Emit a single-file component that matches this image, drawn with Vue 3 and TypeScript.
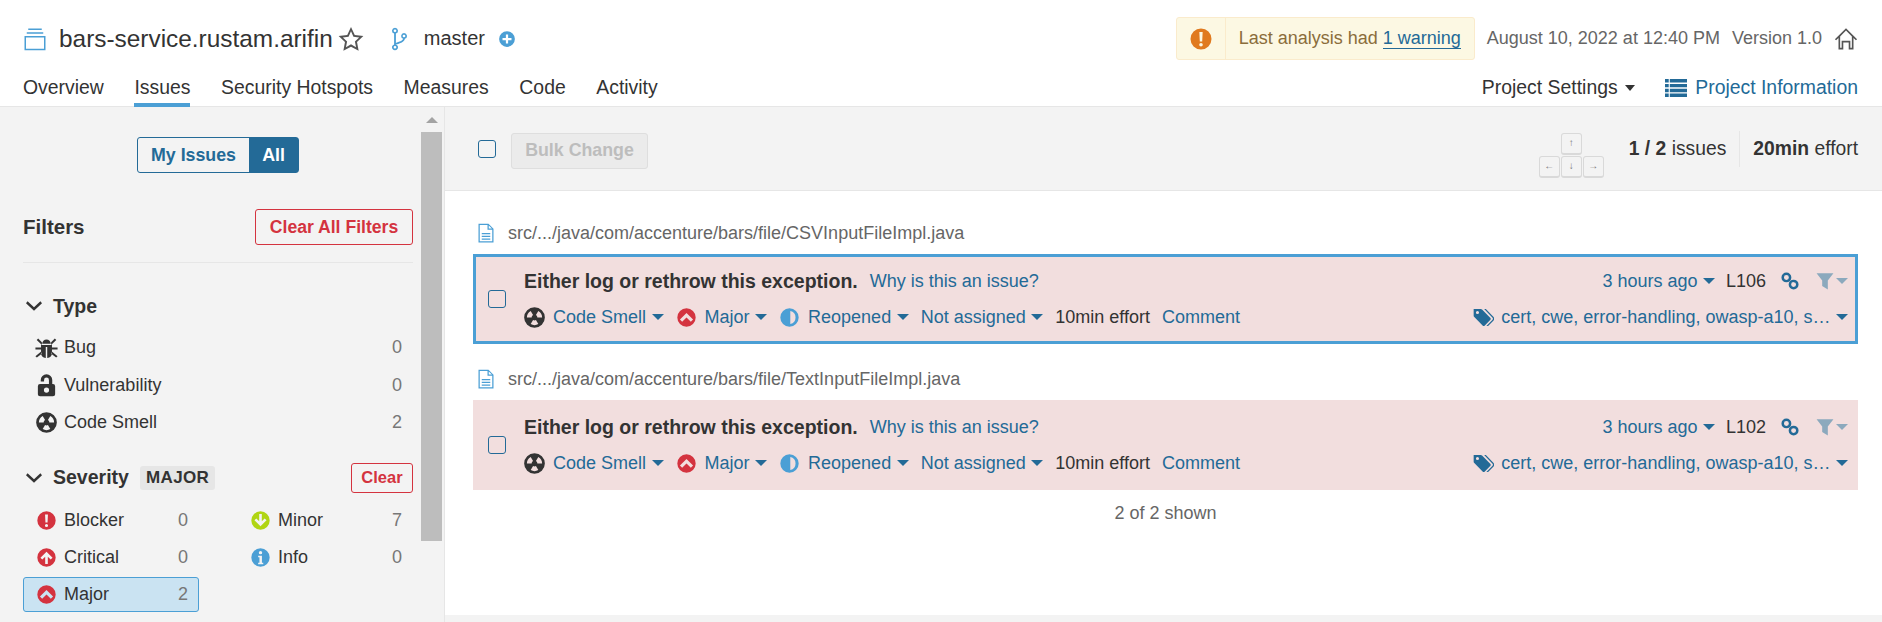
<template>
  <div class="page">
    <header class="header">
      <div class="top-row">
        <Icon name="project" class="project-icon" />
        <h1 class="project-name">bars-service.rustam.arifin</h1>
        <Icon name="star" class="star-icon" />
        <Icon name="branch" class="branch-icon" />
        <span class="branch-name">master</span>
        <Icon name="plus" class="plus-icon" />
        <div class="warning-box">
          <span class="warning-left"><Icon name="blocker" class="warning-icon" /></span>
          <span class="warning-text">Last analysis had <a class="warning-link">1 warning</a></span>
        </div>
        <span class="meta date">August 10, 2022 at 12:40 PM</span>
        <span class="meta version">Version 1.0</span>
        <Icon name="home" class="home-icon" />
      </div>
      <nav class="nav-row">
        <a
          v-for="item in navItems"
          :key="item"
          class="nav-item"
          :class="{ active: item === 'Issues' }"
        >{{ item }}</a>
        <a class="nav-settings">Project Settings<span class="caret dark" /></a>
        <a class="nav-info"><Icon name="list" class="list-icon" />Project Information</a>
      </nav>
    </header>

    <div class="body">
      <aside class="sidebar">
        <div class="sidebar-scroll">
          <div class="toggle">
            <span class="toggle-off">My Issues</span>
            <span class="toggle-on">All</span>
          </div>

          <div class="filters-head">
            <h2>Filters</h2>
            <button class="red-button large">Clear All Filters</button>
          </div>

          <div class="facet-head type-head">
            <Icon name="chevron" class="chevron" />
            <h3>Type</h3>
          </div>
          <div
            v-for="row in typeFacets"
            :key="row.label"
            class="facet-row"
          >
            <Icon :name="row.icon" class="type-icon" />
            <span class="facet-label">{{ row.label }}</span>
            <span class="facet-count">{{ row.count }}</span>
          </div>

          <div class="facet-head severity-head">
            <Icon name="chevron" class="chevron" />
            <h3>Severity</h3>
            <span class="badge">MAJOR</span>
            <button class="red-button small">Clear</button>
          </div>
          <div class="severity-grid">
            <div
              v-for="row in severityFacets"
              :key="row.label"
              class="facet-row"
              :class="{ selected: row.selected }"
            >
              <Icon :name="row.icon" class="facet-icon" :style="{ color: row.color }" />
              <span class="facet-label">{{ row.label }}</span>
              <span class="facet-count">{{ row.count }}</span>
            </div>
          </div>
        </div>
        <div class="scrollbar">
          <span class="scroll-arrow" />
          <span class="scroll-thumb" />
        </div>
      </aside>

      <main class="main">
        <div class="toolbar">
          <span class="checkbox" />
          <button class="bulk-button">Bulk Change</button>
          <div class="keys">
            <span class="key up">↑</span>
            <span class="key left">←</span>
            <span class="key">↓</span>
            <span class="key">→</span>
          </div>
          <span class="paging"><b>1 / 2</b> issues</span>
          <span class="effort"><b>20min</b> effort</span>
        </div>

        <div class="issues">
          <template
            v-for="(issue, index) in issues"
            :key="issue.file"
          >
            <div class="file-path">
              <Icon name="file" class="file-icon" />
              <span>{{ issue.file }}</span>
            </div>
            <div
              class="issue"
              :class="{ current: index === 0 }"
            >
              <span class="checkbox issue-check" />
              <div class="issue-body">
                <div class="issue-line">
                  <strong class="issue-title">Either log or rethrow this exception.</strong>
                  <a class="link why">Why is this an issue?</a>
                  <a class="link age">3 hours ago<span class="caret" /></a>
                  <span class="line-no">{{ issue.line }}</span>
                  <Icon name="chain" class="chain-icon" />
                  <Icon name="funnel" class="funnel-icon" />
                  <span class="caret muted" />
                </div>
                <div class="issue-line second">
                  <Icon name="smell" class="issue-icon smell-icon" />
                  <a class="link">Code Smell<span class="caret" /></a>
                  <Icon name="major" class="issue-icon red" />
                  <a class="link">Major<span class="caret" /></a>
                  <Icon name="reopened" class="issue-icon light-blue" />
                  <a class="link">Reopened<span class="caret" /></a>
                  <a class="link">Not assigned<span class="caret" /></a>
                  <span class="issue-effort">10min effort</span>
                  <a class="link comment">Comment</a>
                  <Icon name="tags" class="tags-icon" />
                  <a class="link tag-list">cert, cwe, error-handling, owasp-a10, s…<span class="caret" /></a>
                </div>
              </div>
            </div>
          </template>
          <div class="shown">2 of 2 shown</div>
        </div>
      </main>
    </div>
  </div>
</template>

<script setup lang="ts">
import { h } from 'vue'

// every icon is drawn on a 16 x 16 grid
const paths: Record<string, string> = {
  blocker: 'M8 1a7 7 0 100 14A7 7 0 008 1zM6.900 3.400h2.200l-.3 6.200H7.200zM8 10.600a1.200 1.200 0 110 2.400 1.200 1.200 0 010-2.400z',
  critical: 'M8 1a7 7 0 100 14A7 7 0 008 1zM8 3.600l4.600 4.600-1.400 1.400-2.200-2.200V13H7V7.400L4.800 9.600 3.400 8.200z',
  major: 'M8 1a7 7 0 100 14A7 7 0 008 1zM8 4.600l5 5-1.700 1.700L8 8l-3.300 3.300L3 9.600z',
  minor: 'M8 1a7 7 0 100 14A7 7 0 008 1zM7 3h2v5.600l2.200-2.200 1.400 1.400L8 12.400 3.400 7.800l1.400-1.400L7 8.600z',
  info: 'M8 1a7 7 0 100 14A7 7 0 008 1zM8 3a1.300 1.300 0 110 2.600A1.300 1.300 0 018 3zM6.200 6.600h2.900V12h1v1.200H6.200V12h1V7.800h-1z',
  bug: 'M5 5.400a3 3 0 016 0zM4.200 6.200h7.600v5.400a3.800 3.800 0 01-3.300 3.700V7.600h-1v7.700a3.800 3.800 0 01-3.300-3.700zM1.200 2.800l1-1 2.600 2.600v1.800zM14.800 2.800l-1-1-2.600 2.600v1.800zM.3 8h3.900v1.400H.3zM11.800 8h3.900v1.400h-3.900zM1.300 15l-1-1 3.800-3 .6 1.300zM14.700 15l1-1-3.800-3-.6 1.300z',
  lock: 'M12 7V4.200a4 4 0 00-8 0V5.200h2.300v-1a1.700 1.700 0 013.400 0V7zM3.500 7h9A1.500 1.500 0 0114 8.500v5.500a1.500 1.500 0 01-1.500 1.500h-9A1.500 1.500 0 012 14V8.500A1.500 1.500 0 013.500 7zM8 9.400a1.800 1.800 0 100 3.600 1.800 1.800 0 000-3.600z',
  smell: 'M8 .8a7.200 7.200 0 100 14.400A7.200 7.200 0 008 .8zM10 8h3.300a5.300 5.300 0 00-2.650-4.590L9 6.270A2 2 0 0110 8zM6 8H2.700a5.300 5.300 0 012.650-4.590L7 6.270A2 2 0 006 8zM7 9.730l-1.650 2.860a5.300 5.300 0 005.300 0L9 9.730a2 2 0 01-2 0z',
  reopened: 'M8 1a7 7 0 100 14A7 7 0 008 1zM8.600 3.100a5 5 0 010 9.800z',
  chevron: 'M1.600 3.200L8 9.200l6.400-6L16 5.200 8 12.800 0 5.200z',
  file: 'M2 .5h8l4 4v11H2zM3 1.500v13h10V5.400H9.200V1.500zM10.200 2v2.400h2.500zM4.600 8h6.800v1H4.600zM4.600 10.200h6.800v1H4.600zM4.600 12.400h6.800v1H4.600z',
  project: 'M1 6h14v9.500H1zM2 7v7.500h12V7zM2.500 3.500h11v1h-11zM3.500 1h9v1h-9z',
  star: 'M8 .6l2.300 4.900 5.300.7-3.900 3.700 1 5.300L8 12.700l-4.700 2.500 1-5.300L.4 6.200l5.300-.7zM8 3.300L6.500 6.600l-3.500.5 2.600 2.400-.7 3.500L8 11.300l3.100 1.700-.7-3.500L13 7.100l-3.500-.5z',
  branch: 'M6 .5a2 2 0 01.6 3.900V11.600a2 2 0 11-1.200 0V4.400A2 2 0 016 .5zM6 1.600a.9.9 0 100 1.800.9.9 0 000-1.800zM6 12.600a.9.9 0 100 1.800.9.9 0 000-1.800zM12 4a2 2 0 01.6 3.900c-.3 1.700-2 2.900-5.800 3.800l-.3-1.100c3.200-.8 4.700-1.700 5-2.700A2 2 0 0112 4zM12 5.100a.9.9 0 100 1.800.9.9 0 000-1.800z',
  plus: 'M8 1a7 7 0 100 14A7 7 0 008 1zM7 4h2v3h3v2H9v3H7V9H4V7h3z',
  home: 'M8 .8l7.400 7.300-.8.800-1.600-1.500V15H9.800v-4.700H6.200V15H3V7.400L1.400 8.900.6 8.100zM8 2.400L4.100 6.300V13.900h1v-4.700h5.800v4.700h1V6.300z',
  list: 'M0 1.500h2.700v2.500H0zM3.500 1.500H16v2.500H3.500zM0 5h2.700v2.500H0zM3.500 5H16v2.500H3.500zM0 8.500h2.700V11H0zM3.500 8.500H16V11H3.500zM0 12h2.700v2.500H0zM3.500 12H16v2.500H3.500z',
  chain: 'M4.800.4a4.400 4.400 0 110 8.800 4.400 4.400 0 010-8.800zM4.800 2.600a2.200 2.200 0 100 4.400 2.200 2.200 0 000-4.400zM11.200 6.800a4.400 4.400 0 110 8.800 4.400 4.400 0 010-8.800zM11.200 9a2.200 2.200 0 100 4.400 2.200 2.200 0 000-4.400z',
  funnel: 'M.5 1h15l-5 6.500V15.500L5.500 12.500V7.500z',
  tags: 'M.5 1.500h5.300a1.500 1.500 0 011.100.400l6.200 6.300a1.200 1.200 0 010 1.700l-4.100 4.100a1.200 1.200 0 01-1.700 0L1 7.700a1.500 1.500 0 01-.5-1.100zM3.400 3a1.200 1.200 0 100 2.400 1.200 1.200 0 000-2.400zM8.500 1.500h1.300l5.700 5.900a2.400 2.400 0 010 3.100l-4 4h-1.300l4.300-4.400a1.500 1.500 0 000-2.300z',
}

const Icon = (props: { name: string }) =>
  h('svg', { viewBox: '0 0 16 16', fill: 'currentColor', 'aria-hidden': 'true' }, [
    h('path', { d: paths[props.name], 'fill-rule': 'evenodd' }),
  ])
Icon.props = ['name']

const navItems = ['Overview', 'Issues', 'Security Hotspots', 'Measures', 'Code', 'Activity']

const typeFacets = [
  { icon: 'bug', label: 'Bug', count: 0 },
  { icon: 'lock', label: 'Vulnerability', count: 0 },
  { icon: 'smell', label: 'Code Smell', count: 2 },
]

const severityFacets = [
  { icon: 'blocker', label: 'Blocker', count: 0, color: '#d4333f' },
  { icon: 'minor', label: 'Minor', count: 7, color: '#b0d513' },
  { icon: 'critical', label: 'Critical', count: 0, color: '#d4333f' },
  { icon: 'info', label: 'Info', count: 0, color: '#4b9fd5' },
  { icon: 'major', label: 'Major', count: 2, color: '#d4333f', selected: true },
]

const issues = [
  { file: 'src/.../java/com/accenture/bars/file/CSVInputFileImpl.java', line: 'L106' },
  { file: 'src/.../java/com/accenture/bars/file/TextInputFileImpl.java', line: 'L102' },
]
</script>

<style>
html,
body {
  margin: 0;
  background: #fff;
}
</style>

<style scoped>
.page {
  display: flex;
  flex-direction: column;
  height: 622px;
  overflow: hidden;
  font-family: "Liberation Sans", Arial, sans-serif;
  font-size: 18px;
  color: #333;
}

svg {
  display: block;
  flex: none;
}

a {
  cursor: pointer;
}

.header {
  flex: none;
  height: 107px;
  box-sizing: border-box;
  padding: 17px 24px 0 23px;
  background: #fff;
  border-bottom: 1px solid #e6e6e6;
}

.top-row {
  display: flex;
  align-items: center;
  height: 43px;
}

.project-icon {
  width: 24px;
  height: 24px;
  color: #4b9fd5;
  margin-right: 12px;
}

.project-name {
  margin: 0;
  font-size: 24.4px;
  font-weight: 400;
}

.star-icon {
  width: 26px;
  height: 26px;
  margin-left: 5px;
  color: #555;
}

.branch-icon {
  width: 24px;
  height: 24px;
  margin-left: 22px;
  color: #4b9fd5;
}

.branch-name {
  margin-left: 14px;
  font-size: 20px;
}

.plus-icon {
  width: 18px;
  height: 18px;
  margin-left: 13px;
  color: #4b9fd5;
}

.warning-box {
  display: flex;
  align-items: center;
  height: 43px;
  box-sizing: border-box;
  margin-left: auto;
  background: #fcf8e3;
  border: 1px solid #faebcc;
  border-radius: 3px;
  color: #8a6d3b;
}

.warning-left {
  display: flex;
  align-items: center;
  height: 100%;
  padding: 0 12px;
  border-right: 1px solid #faebcc;
}

.warning-icon {
  width: 24px;
  height: 24px;
  color: #e07a1f;
}

.warning-text {
  padding: 0 13px;
}

.warning-link {
  color: #236a97;
  border-bottom: 1px solid #236a97;
}

.meta {
  color: #666;
}

.date {
  margin-left: 12px;
}

.version {
  margin-left: 12px;
}

.home-icon {
  width: 24px;
  height: 24px;
  margin-left: 12px;
  color: #555;
}

.nav-row {
  display: flex;
  align-items: flex-start;
  gap: 30.600px;
  margin-top: 14px;
  font-size: 19.400px;
}

.nav-item {
  height: 33px;
  box-sizing: border-box;
  padding-top: 2px;
  color: #333;
}

.nav-item.active {
  border-bottom: 4px solid #4b9fd5;
}

.nav-settings {
  display: flex;
  align-items: center;
  margin-left: auto;
  padding-top: 2px;
}

.nav-info {
  display: flex;
  align-items: center;
  gap: 8px;
  padding-top: 2px;
  color: #236a97;
}

.list-icon {
  width: 22px;
  height: 22px;
}

.caret {
  display: inline-block;
  width: 0;
  height: 0;
  margin-left: 5.500px;
  vertical-align: 3px;
  border-left: 6px solid transparent;
  border-right: 6px solid transparent;
  border-top: 6px solid #236a97;
}

.caret.dark {
  margin-left: 7px;
  border-top-color: #333;
  border-left-width: 5px;
  border-right-width: 5px;
}

.caret.muted {
  margin-left: 2px;
  border-top-color: #8ca9bd;
}

.body {
  flex: 1;
  display: flex;
  min-height: 0;
  background: #f3f3f3;
}

.sidebar {
  flex: none;
  display: flex;
  width: 445px;
  box-sizing: border-box;
  border-right: 1px solid #e6e6e6;
}

.sidebar-scroll {
  flex: 1;
  min-width: 0;
  box-sizing: border-box;
  padding: 30px 8px 0 23px;
}

.toggle {
  display: flex;
  width: 162px;
  height: 36px;
  box-sizing: border-box;
  margin: 0 auto 0 114px;
  border: 1px solid #236a97;
  border-radius: 3px;
  font-size: 17.800px;
  font-weight: 700;
  line-height: 34px;
}

.toggle-off {
  flex: 1;
  text-align: center;
  color: #236a97;
}

.toggle-on {
  width: 49px;
  text-align: center;
  background: #236a97;
  color: #fff;
}

.filters-head {
  display: flex;
  align-items: flex-start;
  justify-content: space-between;
  height: 53px;
  margin-top: 36px;
  border-bottom: 1px solid #e6e6e6;
}

.filters-head h2 {
  margin: 6px 0 0;
  font-size: 20.500px;
  font-weight: 700;
}

.red-button {
  box-sizing: border-box;
  padding: 0;
  background: transparent;
  border: 1px solid #d4333f;
  border-radius: 3px;
  color: #d4333f;
  font-family: inherit;
  font-weight: 700;
}

.red-button.large {
  width: 158px;
  height: 36px;
  font-size: 17.600px;
}

.red-button.small {
  width: 62px;
  height: 30px;
  margin-left: auto;
  font-size: 16.500px;
}

.facet-head {
  display: flex;
  align-items: center;
}

.type-head {
  height: 30px;
  margin-top: 28px;
}

.severity-head {
  height: 30px;
  margin-top: 22.500px;
}

.facet-head h3 {
  margin: 0;
  font-size: 19.500px;
  font-weight: 700;
}

.chevron {
  width: 16px;
  height: 16px;
  margin: 0 11px 0 3px;
}

.badge {
  margin-left: 11px;
  padding: 2px 6px;
  background: #e6e6e6;
  border-radius: 3px;
  font-size: 17px;
  font-weight: 700;
  letter-spacing: .4px;
}

.facet-row {
  display: flex;
  align-items: center;
  height: 35px;
  box-sizing: border-box;
  margin-top: 2.500px;
  padding: 0 10px 0 12px;
  border: 1px solid transparent;
  border-radius: 3px;
}

.type-head + .facet-row {
  margin-top: 9px;
}

.type-icon {
  width: 23px;
  height: 23px;
  margin: 0 6px 0 -1px;
  color: #333;
}

.facet-icon {
  width: 21px;
  height: 21px;
  margin-right: 7px;
}

.facet-count {
  margin-left: auto;
  color: #777;
}

.severity-grid {
  display: grid;
  grid-template-columns: 176px 176px;
  column-gap: 38px;
  margin-top: 10.400px;
}

.severity-grid .facet-row {
  margin-top: 0;
  margin-bottom: 2px;
}

.facet-row.selected {
  background: #cae3f2;
  border-color: #4b9fd5;
}

.scrollbar {
  flex: none;
  display: flex;
  flex-direction: column;
  align-items: center;
  width: 21px;
  margin-right: 2px;
}

.scroll-arrow {
  width: 0;
  height: 0;
  margin-top: 10px;
  border-left: 6px solid transparent;
  border-right: 6px solid transparent;
  border-bottom: 6px solid #a3a3a3;
}

.scroll-thumb {
  width: 100%;
  height: 409px;
  margin-top: 9px;
  background: #bdbdbd;
}

.main {
  flex: 1;
  min-width: 0;
  display: flex;
  flex-direction: column;
  margin-bottom: 7px;
  background: #fff;
}

.toolbar {
  flex: none;
  display: flex;
  align-items: center;
  height: 84px;
  box-sizing: border-box;
  padding: 0 24px 0 33px;
  background: #f3f3f3;
  border-bottom: 1px solid #e6e6e6;
  font-size: 19.300px;
}

.checkbox {
  display: block;
  flex: none;
  width: 18px;
  height: 18px;
  box-sizing: border-box;
  border: 1px solid #236a97;
  border-radius: 3px;
}

.bulk-button {
  width: 137px;
  height: 36px;
  margin: 4px 0 0 15px;
  padding: 0;
  background: #ebebeb;
  border: 1px solid #dedede;
  border-radius: 3px;
  color: #bdbdbd;
  font-family: inherit;
  font-size: 17.800px;
  font-weight: 700;
}

.keys {
  display: grid;
  grid-template-columns: repeat(3, 21px);
  gap: 1px;
  margin: 14px 0 0 auto;
}

.key {
  height: 22px;
  background: #f3f3f3;
  border: 1px solid #d9d9d9;
  border-bottom-width: 2px;
  border-radius: 3px;
  box-sizing: border-box;
  color: #777;
  font-size: 10px;
  line-height: 18px;
  text-align: center;
}

.key.up {
  grid-column: 2;
}

.key.left {
  grid-column: 1;
}

.paging {
  margin-left: 25px;
  padding-right: 13px;
  border-right: 1px solid #e6e6e6;
  line-height: 36px;
}

.effort {
  margin-left: 13px;
}

.issues {
  padding: 29px 24px 0 28px;
}

.file-path {
  display: flex;
  align-items: center;
  gap: 12px;
  height: 26px;
  padding-left: 3px;
  margin-bottom: 8px;
  color: #666;
}

.file-icon {
  width: 20px;
  height: 22px;
  color: #4b9fd5;
}

.issue {
  display: flex;
  align-items: center;
  height: 90px;
  box-sizing: border-box;
  margin-bottom: 22px;
  padding: 0 7px 0 12px;
  background: #f2dede;
  border: 3px solid #f2dede;
}

.issue.current {
  border-color: #4b9fd5;
}

.issue-check {
  margin-right: 18px;
}

.issue-body {
  flex: 1;
  min-width: 0;
}

.issue-line {
  display: flex;
  align-items: center;
  height: 26px;
}

.issue-line.second {
  margin-top: 10px;
}

.issue-title {
  font-size: 19.500px;
}

.link {
  color: #236a97;
  white-space: nowrap;
}

.second .link {
  margin-right: 12px;
}

.why {
  margin-left: 12px;
}

.age {
  margin-left: auto;
}

.line-no {
  margin-left: 11px;
}

.chain-icon {
  width: 18px;
  height: 18px;
  margin-left: 15px;
  color: #236a97;
}

.funnel-icon {
  width: 18px;
  height: 18px;
  margin-left: 17px;
  color: #8ca9bd;
}

.issue-icon {
  width: 21px;
  height: 21px;
  margin-right: 8px;
}

.smell-icon {
  width: 23px;
  height: 23px;
  margin-left: -1px;
  margin-right: 7px;
  color: #333;
}

.red {
  color: #d4333f;
}

.light-blue {
  color: #4b9fd5;
}

.issue-effort {
  white-space: nowrap;
}

.second .comment {
  margin-left: 12px;
  margin-right: auto;
}

.tags-icon {
  width: 21px;
  height: 21px;
  margin-right: 7px;
  color: #236a97;
}

.second .tag-list {
  margin-right: 0;
}

.shown {
  margin-top: -9px;
  text-align: center;
  color: #666;
}
</style>
